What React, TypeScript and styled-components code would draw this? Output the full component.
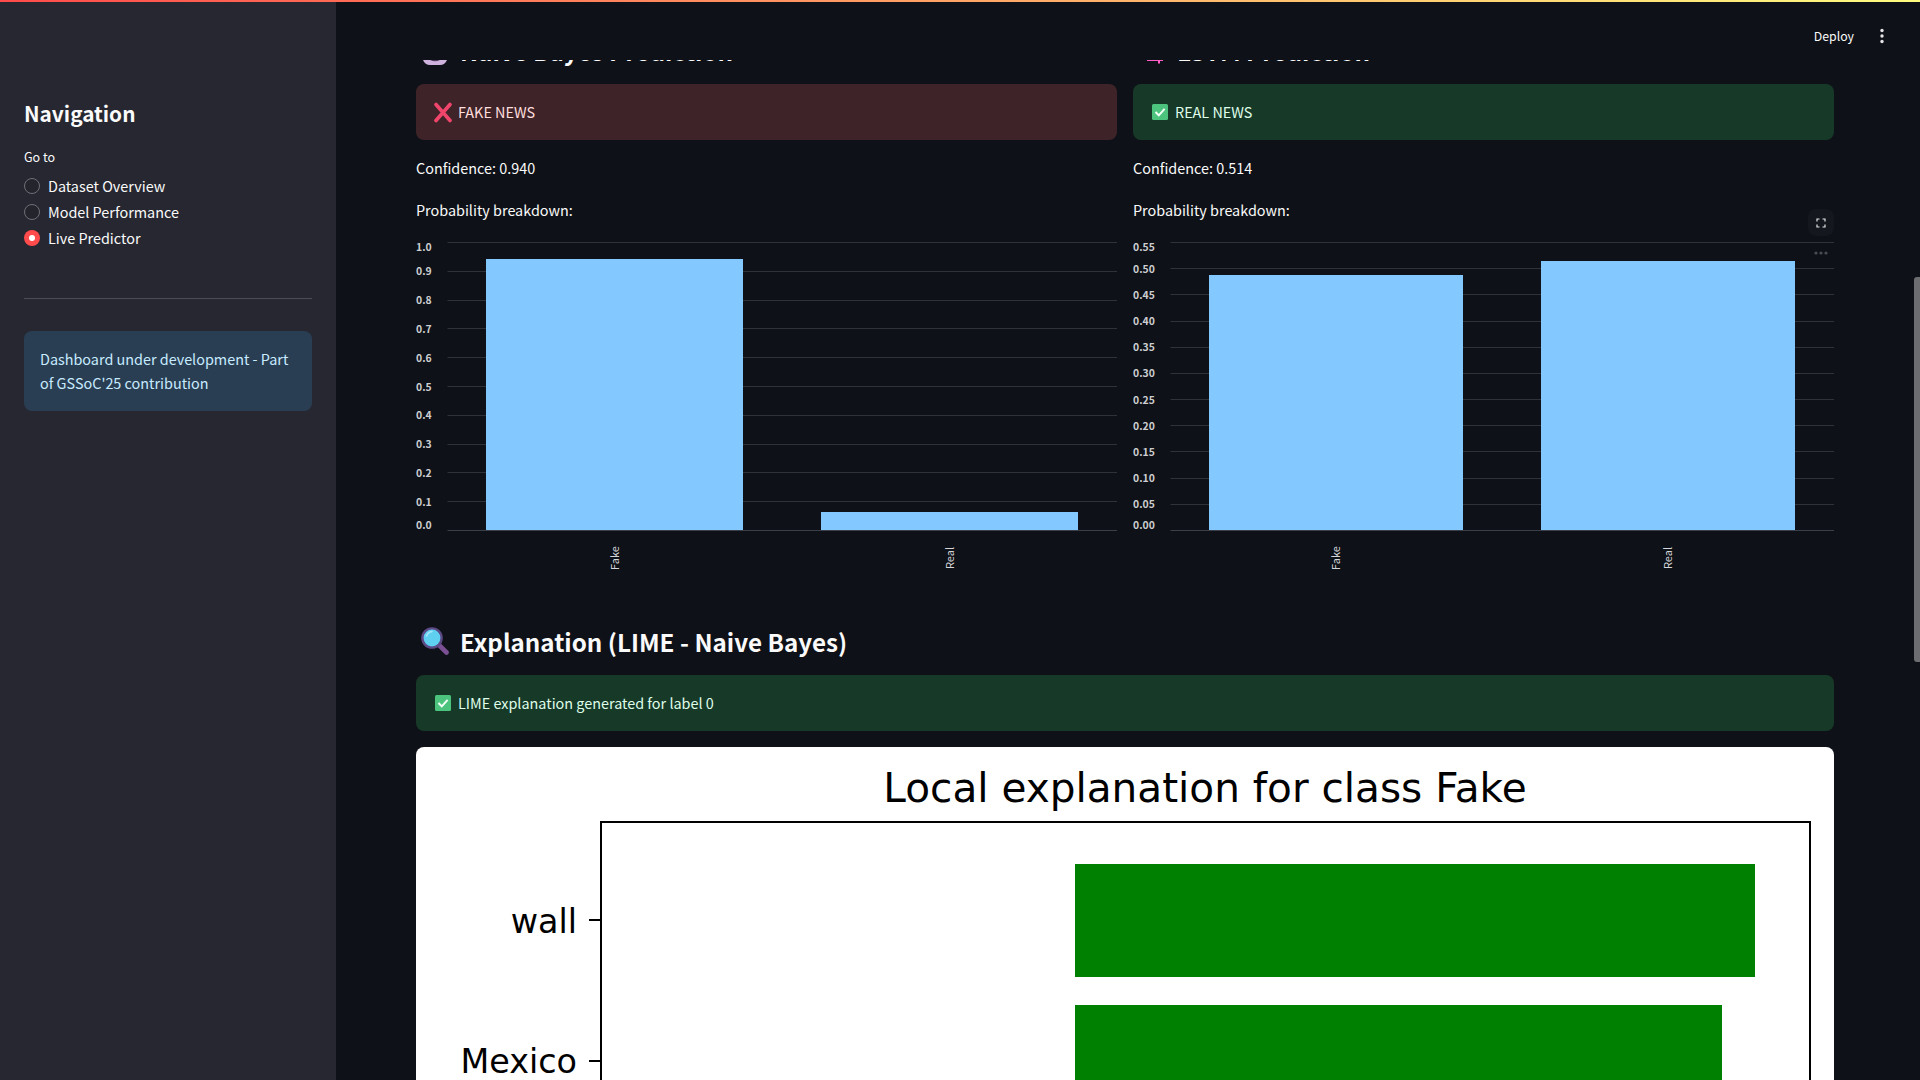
import React from "react";
import styled, { createGlobalStyle } from "styled-components";

const FONT = `"Noto Sans CJK SC", "Noto Sans", sans-serif`;

const Global = createGlobalStyle`
  html, body { margin: 0; padding: 0; background: #0e1117; }
  body { font-family: ${FONT}; color: #fafafa; overflow: hidden; }
  * { box-sizing: border-box; }
`;

const Page = styled.div`
  position: relative;
  display: flex;
  width: 100%;
  height: 100vh;
  overflow: hidden;
`;
const Decoration = styled.div`
  position: absolute;
  top: 0;
  left: 0;
  right: 0;
  height: 2px;
  z-index: 5;
  background: linear-gradient(90deg, #ff4b4b, #fffd80);
`;
const Sidebar = styled.aside`
  flex: 0 0 336px;
  height: 100%;
  background: #262730;
  padding: 97px 24px 0;
  display: flex;
  flex-direction: column;
`;
const NavTitle = styled.h2`
  margin: 0 0 18px;
  font-size: 20.8px;
  line-height: 32px;
  font-weight: 600;
  color: #fafafa;
`;
const GoTo = styled.div`
  font-size: 12.5px;
  line-height: 20px;
  margin-bottom: 6px;
  color: #fafafa;
`;
const RadioRow = styled.div`
  display: flex;
  align-items: center;
  gap: 8px;
  height: 26px;
  font-size: 14.4px;
  color: #fafafa;
`;
const RadioLabel = styled.span`
  padding-bottom: 2px;
`;
const RadioDot = styled.span<{ $on?: boolean }>`
  width: 16px;
  height: 16px;
  border-radius: 50%;
  display: flex;
  align-items: center;
  justify-content: center;
  background: ${(p) => (p.$on ? "#ff4b4b" : "#23242c")};
  border: ${(p) => (p.$on ? "none" : "1px solid #6f7077")};
  &::after {
    content: "";
    display: ${(p) => (p.$on ? "block" : "none")};
    width: 6px;
    height: 6px;
    border-radius: 50%;
    background: #fff;
  }
`;
const Divider = styled.hr`
  margin: 47px 0 32px;
  border: 0;
  height: 1px;
  background: #4b4c54;
`;
const InfoBox = styled.div`
  background: #2a3e53;
  color: #c7ebff;
  border-radius: 8px;
  padding: 16px;
  font-size: 14.4px;
  line-height: 24px;
`;
const Main = styled.main`
  position: relative;
  flex: 1;
  height: 100%;
  overflow: hidden;
  background: #0e1117;
`;
const TopBar = styled.header`
  position: absolute;
  top: 0;
  left: 0;
  right: 0;
  height: 60px;
  background: #0e1117;
  z-index: 3;
  display: flex;
  align-items: center;
  justify-content: flex-end;
  padding: 12px 35px 0 0;
  gap: 25px;
`;
const Deploy = styled.span`
  font-size: 12.3px;
  line-height: 20px;
  color: #fafafa;
`;
const Kebab = styled.svg`
  width: 6px;
  height: 16px;
  display: block;
`;
const ScrollThumb = styled.div`
  position: absolute;
  right: 0;
  top: 277px;
  width: 6px;
  height: 385px;
  background: #6c6d71;
  border-radius: 3px 0 0 3px;
  z-index: 4;
`;
const Content = styled.div`
  padding: 34px 86px 0 80px;
  display: flex;
  flex-direction: column;
`;
const Columns = styled.div`
  display: grid;
  grid-template-columns: 701px 701px;
  gap: 16px;
`;
const Column = styled.section`
  display: flex;
  flex-direction: column;
  min-width: 0;
`;
const Heading = styled.h3`
  margin: 0 0 16px;
  display: flex;
  align-items: flex-start;
  font-size: 24.2px;
  line-height: 34px;
  height: 34px;
  font-weight: 600;
  color: #fafafa;
  white-space: nowrap;
`;
const HeadingIcon = styled.svg`
  flex: 0 0 28px;
  width: 28px;
  height: 30px;
  margin: 2px 11px 0 5px;
  display: block;
`;
const Alert = styled.div<{ $kind: "error" | "success" }>`
  display: flex;
  align-items: center;
  height: 56px;
  padding: 16px;
  border-radius: 8px;
  font-size: 14.4px;
  line-height: 24px;
  background: ${(p) => (p.$kind === "error" ? "#3e2428" : "#173928")};
  color: ${(p) => (p.$kind === "error" ? "#ffdede" : "#dffde9")};
`;
const AlertIcon = styled.svg`
  flex: 0 0 22px;
  width: 22px;
  height: 22px;
  margin-right: 4px;
  display: block;
`;
const Para = styled.p<{ $top: number }>`
  margin: ${(p) => p.$top}px 0 0;
  font-size: 14.4px;
  line-height: 24px;
  color: #fafafa;
`;
const ChartWrap = styled.div`
  position: relative;
  margin-top: 14px;
  height: 350px;
`;
const ChartSvg = styled.svg`
  display: block;
  width: 701px;
  height: 350px;
`;
const TickLabel = styled.text`
  font-family: ${FONT};
  font-size: 10.4px;
  font-weight: 600;
  fill: #cdced1;
`;
const CatLabel = styled.text`
  font-family: ${FONT};
  font-size: 11px;
  fill: #d4d5d8;
`;
const ExpandButton = styled.div`
  position: absolute;
  right: 0;
  top: -27px;
  width: 26px;
  height: 27px;
  border-radius: 8px;
  background: #14171e;
  display: flex;
  align-items: center;
  justify-content: center;
`;
const MoreDots = styled.svg`
  position: absolute;
  right: 6px;
  top: 15px;
  width: 14px;
  height: 4px;
  display: block;
`;
const ExplainHeading = styled(Heading)`
  margin-top: 39px;
`;
const Figure = styled.div`
  margin-top: 16px;
  background: #ffffff;
  border-radius: 8px 8px 0 0;
  overflow: hidden;
  height: 340px;
`;
const FigureSvg = styled.svg`
  display: block;
  width: 1418px;
  height: 340px;
`;
const PlotText = styled.text`
  font-family: "DejaVu Sans", sans-serif;
  fill: #000;
`;

const XMark = () => (
  <AlertIcon viewBox="0 0 22 22">
    <path d="M4 3.5 L18 19.5 M18 3.5 L4 19.5" stroke="#f2456c" strokeWidth="3.6" strokeLinecap="round" fill="none" />
  </AlertIcon>
);
const CheckMark = () => (
  <AlertIcon viewBox="0 0 22 22">
    <rect x="3" y="3" width="16" height="16" rx="1.5" fill="#4cc47e" />
    <path d="M6.5 11 L9.8 14.4 L15.6 7.8" stroke="#f4fff8" strokeWidth="2" fill="none" />
  </AlertIcon>
);

type Bar = { x: number; w: number; top: number; label: string };
type ChartProps = { plotLeft: number; labels: string[]; bars: Bar[] };

const H0 = 6.5;
const H1 = 294.5;

const Chart = ({ plotLeft, labels, bars }: ChartProps) => {
  const n = labels.length - 1;
  return (
    <ChartSvg viewBox="0 0 701 350">
      {labels.map((_, i) => {
        const y = Math.round(H0 + ((H1 - H0) * i) / n - 0.5) + 0.5;
        return <line key={i} x1={plotLeft} x2={701} y1={y} y2={y} stroke={i === n ? "#3a3f4a" : "#2f3239"} strokeWidth="1" />;
      })}
      {labels.map((t, i) => {
        const y = H0 + ((H1 - H0) * i) / n;
        const shift = i === 0 ? 8.5 : i === n ? -2 : 4;
        return (
          <TickLabel key={t} x={0} y={y + shift}>
            {t}
          </TickLabel>
        );
      })}
      {bars.map((b) => (
        <g key={b.label}>
          <rect x={b.x} y={b.top} width={b.w} height={294 - b.top} fill="#83c9ff" />
          <CatLabel
            x={0}
            y={0}
            textAnchor="middle"
            transform={`translate(${b.x + b.w / 2 + 4}, 322) rotate(-90)`}
          >
            {b.label}
          </CatLabel>
        </g>
      ))}
    </ChartSvg>
  );
};

export default function App() {
  return (
    <>
      <Global />
      <Page>
        <Decoration />
        <Sidebar>
          <NavTitle>Navigation</NavTitle>
          <GoTo>Go to</GoTo>
          <RadioRow><RadioDot /><RadioLabel>Dataset Overview</RadioLabel></RadioRow>
          <RadioRow><RadioDot /><RadioLabel>Model Performance</RadioLabel></RadioRow>
          <RadioRow><RadioDot $on /><RadioLabel>Live Predictor</RadioLabel></RadioRow>
          <Divider />
          <InfoBox>Dashboard under development - Part of GSSoC'25 contribution</InfoBox>
        </Sidebar>
        <Main>
          <TopBar>
            <Deploy>Deploy</Deploy>
            <Kebab viewBox="0 0 6 16">
              <circle cx="3" cy="2.5" r="1.7" fill="#e4e4e6" />
              <circle cx="3" cy="8" r="1.7" fill="#e4e4e6" />
              <circle cx="3" cy="13.5" r="1.7" fill="#e4e4e6" />
            </Kebab>
          </TopBar>
          <ScrollThumb />
          <Content>
            <Columns>
              <Column>
                <Heading>
                  <HeadingIcon viewBox="0 0 28 30">
                    <path d="M2 24 Q2 4 14 4 Q26 4 26 24 Q24 29 19 29 H9 Q4 29 2 24Z" fill="#cfb3de" />
                    <path d="M9 24 H19 Q14 26.5 9 24Z" fill="#4d3a5c" />
                  </HeadingIcon>
                  Naive Bayes Prediction
                </Heading>
                <Alert $kind="error"><XMark />FAKE NEWS</Alert>
                <Para $top={16}>Confidence: 0.940</Para>
                <Para $top={18}>Probability breakdown:</Para>
                <ChartWrap>
                  <Chart
                    plotLeft={31.5}
                    labels={["1.0", "0.9", "0.8", "0.7", "0.6", "0.5", "0.4", "0.3", "0.2", "0.1", "0.0"]}
                    bars={[
                      { x: 70, w: 257, top: 23, label: "Fake" },
                      { x: 405, w: 257, top: 276, label: "Real" },
                    ]}
                  />
                </ChartWrap>
              </Column>
              <Column>
                <Heading>
                  <HeadingIcon viewBox="0 0 28 30">
                    <path d="M9 24 V8 Q16 2 25 8 V25 H22 V27.5 H20 V25 H9Z" fill="#ff5ec4" />
                  </HeadingIcon>
                  LSTM Prediction
                </Heading>
                <Alert $kind="success"><CheckMark />REAL NEWS</Alert>
                <Para $top={16}>Confidence: 0.514</Para>
                <Para $top={18}>Probability breakdown:</Para>
                <ChartWrap>
                  <ExpandButton>
                    <svg width="10" height="10" viewBox="0 0 10 10" fill="none" stroke="#e6e6e8" strokeWidth="1.2">
                      <path d="M1 3.5 V1 H3.5 M6.5 1 H9 V3.5 M9 6.5 V9 H6.5 M3.5 9 H1 V6.5" />
                    </svg>
                  </ExpandButton>
                  <MoreDots viewBox="0 0 14 4">
                    <circle cx="2" cy="2" r="1.6" fill="#4a4c55" />
                    <circle cx="7" cy="2" r="1.6" fill="#4a4c55" />
                    <circle cx="12" cy="2" r="1.6" fill="#4a4c55" />
                  </MoreDots>
                  <Chart
                    plotLeft={37.5}
                    labels={["0.55", "0.50", "0.45", "0.40", "0.35", "0.30", "0.25", "0.20", "0.15", "0.10", "0.05", "0.00"]}
                    bars={[
                      { x: 76, w: 254, top: 39, label: "Fake" },
                      { x: 408, w: 254, top: 25, label: "Real" },
                    ]}
                  />
                </ChartWrap>
              </Column>
            </Columns>
            <ExplainHeading>
              <HeadingIcon viewBox="0 0 28 30">
                <path d="M18 18 L25.5 25.5" stroke="#7b4f93" strokeWidth="4.6" strokeLinecap="round" />
                <circle cx="11" cy="11" r="9.6" fill="#5fd0f0" stroke="#5c4a86" strokeWidth="2.4" />
                <path d="M5.5 9 Q7 5 11 4.5" stroke="#a6e8fa" strokeWidth="1.6" fill="none" strokeLinecap="round" />
              </HeadingIcon>
              Explanation (LIME - Naive Bayes)
            </ExplainHeading>
            <Alert $kind="success"><CheckMark />LIME explanation generated for label 0</Alert>
            <Figure>
              <FigureSvg viewBox="0 0 1418 340">
                <PlotText x={789} y={55} fontSize="40.6" textAnchor="middle">Local explanation for class Fake</PlotText>
                <rect x={185} y={75} width={1209} height={300} fill="none" stroke="#000" strokeWidth="2" />
                <rect x={659} y={117} width={680} height={113} fill="#008000" />
                <rect x={659} y={258} width={647} height={113} fill="#008000" />
                <line x1={173} x2={185} y1={173} y2={173} stroke="#000" strokeWidth="2" />
                <line x1={173} x2={185} y1={314} y2={314} stroke="#000" strokeWidth="2" />
                <PlotText x={161} y={186} fontSize="33.4" textAnchor="end">wall</PlotText>
                <PlotText x={161} y={326} fontSize="33.4" textAnchor="end">Mexico</PlotText>
              </FigureSvg>
            </Figure>
          </Content>
        </Main>
      </Page>
    </>
  );
}
